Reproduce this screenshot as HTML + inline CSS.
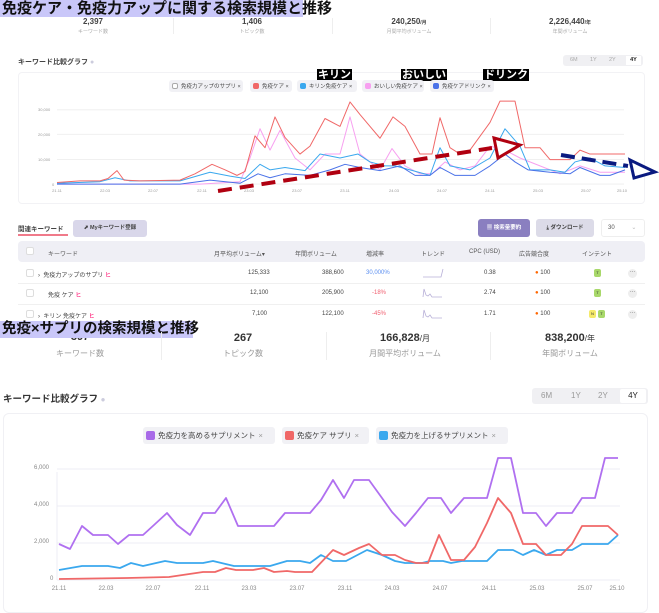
<!DOCTYPE html>
<html><head><meta charset="utf-8"><style>
*{margin:0;padding:0;box-sizing:border-box}
body{width:659px;height:600px;overflow:hidden;background:#fff;position:relative;font-family:"Liberation Sans","Noto Sans CJK JP",sans-serif;color:#333}
.a{position:absolute;white-space:nowrap}
.c{transform:translateX(-50%);text-align:center}
.ttl{background:#c9c7f9;color:#111;font-weight:bold}
.n1{font-size:8px;font-weight:bold;color:#444}
.l1{font-size:5px;color:#aaa}
.div{position:absolute;width:1px;background:#eee}
.chip{position:absolute;background:#f1f1f5;border-radius:3px;font-size:5.5px;color:#444;display:flex;align-items:center;padding-left:3px}
.cb{display:inline-block;border-radius:2px;margin-right:3px}
.blk{position:absolute;background:#000;color:#fff;font-weight:bold;font-size:11px;line-height:12px;padding:0 1px}
.th{font-size:6px;color:#555}
.td{font-size:6px;color:#444}
</style></head><body>
<!-- TOP -->
<div class="a ttl" style="left:0;top:0;width:303px;height:17px;font-size:15px;line-height:17px;padding-left:2px">免疫ケア・免疫力アップに関する検索規模と推移</div>
<div class="a c n1" style="left:93px;top:17px">2,397</div><div class="a c l1" style="left:93px;top:28px">キーワード数</div>
<div class="a c n1" style="left:252px;top:17px">1,406</div><div class="a c l1" style="left:252px;top:28px">トピック数</div>
<div class="a c n1" style="left:409px;top:17px">240,250<span style="font-size:5px">/月</span></div><div class="a c l1" style="left:409px;top:28px">月間平均ボリューム</div>
<div class="a c n1" style="left:570px;top:17px">2,226,440<span style="font-size:5px">/年</span></div><div class="a c l1" style="left:570px;top:28px">年間ボリューム</div>
<div class="div" style="left:173px;top:18px;height:16px"></div><div class="div" style="left:332px;top:18px;height:16px"></div><div class="div" style="left:490px;top:18px;height:16px"></div>
<div class="a" style="left:18px;top:57px;font-size:7px;font-weight:bold;color:#444">キーワード比較グラフ <span style="color:#ccd">●</span></div>
<div class="a" style="left:563px;top:55px;width:80px;height:11px;background:#f0f0f3;border-radius:3px;font-size:5.5px;color:#aaa"><span class="a" style="left:7px;top:2px">6M</span><span class="a" style="left:27px;top:2px">1Y</span><span class="a" style="left:46px;top:2px">2Y</span><span class="a" style="left:63px;top:1px;width:15px;height:9px;background:#fff;color:#222;text-align:center;padding-top:1px;font-weight:bold">4Y</span></div>
<div class="a" style="left:18px;top:72px;width:627px;height:132px;border:1px solid #f2f2f5;border-radius:4px"></div>
<div class="blk" style="left:317px;top:69px">キリン</div>
<div class="blk" style="left:401px;top:69px">おいしい</div>
<div class="blk" style="left:483px;top:69px">ドリンク</div>
<div class="chip" style="left:169px;top:80px;width:74px;height:12px"><span class="cb" style="width:6px;height:6px;border:1px solid #aaa;background:#fff"></span>免疫力アップのサプリ ×</div>
<div class="chip" style="left:250px;top:80px;width:42px;height:12px"><span class="cb" style="width:6px;height:6px;background:#f06868"></span>免疫ケア ×</div>
<div class="chip" style="left:297px;top:80px;width:60px;height:12px"><span class="cb" style="width:6px;height:6px;background:#3aa8ee"></span>キリン免疫ケア ×</div>
<div class="chip" style="left:362px;top:80px;width:62px;height:12px"><span class="cb" style="width:6px;height:6px;background:#f7a0f0"></span>おいしい免疫ケア ×</div>
<div class="chip" style="left:430px;top:80px;width:64px;height:12px"><span class="cb" style="width:6px;height:6px;background:#4a72e8"></span>免疫ケアドリンク ×</div>
<div class="a" style="left:38px;top:107px;font-size:4px;color:#999">30,000</div>
<div class="a" style="left:38px;top:132px;font-size:4px;color:#999">20,000</div>
<div class="a" style="left:38px;top:157px;font-size:4px;color:#999">10,000</div>
<div class="a" style="left:52px;top:182px;font-size:4px;color:#999">0</div>
<div style="position:absolute;left:0;top:188px;width:659px;font-size:4px;color:#999">
<span class="a c" style="left:57px">21.11</span><span class="a c" style="left:105px">22.03</span><span class="a c" style="left:153px">22.07</span><span class="a c" style="left:202px">22.11</span><span class="a c" style="left:249px">23.03</span><span class="a c" style="left:297px">23.07</span><span class="a c" style="left:345px">23.11</span><span class="a c" style="left:394px">24.03</span><span class="a c" style="left:442px">24.07</span><span class="a c" style="left:490px">24.11</span><span class="a c" style="left:538px">25.03</span><span class="a c" style="left:586px">25.07</span><span class="a c" style="left:622px">25.10</span></div>
<svg class="a" style="left:0;top:0" width="659" height="200">
<g transform="scale(1,0.79)" fill="none" stroke-width="1" stroke-linejoin="round">
<g stroke="#eee" vector-effect="non-scaling-stroke"><line x1="57" y1="139" x2="624" y2="139"/><line x1="57" y1="170" x2="624" y2="170"/><line x1="57" y1="202" x2="624" y2="202"/><line x1="57" y1="233" x2="624" y2="233"/></g>
<polyline vector-effect="non-scaling-stroke" stroke="#f7a0f0" points="57,233 200,233 240,230 250,200 260,163 270,190 280,165 295,200 310,215 325,195 340,195 350,148 360,195 380,215 392,188 405,210 420,220 432,220 445,205 460,215 475,210 490,185 505,190 520,200 540,210 560,220 580,210 600,218 625,218"/>
<polyline vector-effect="non-scaling-stroke" stroke="#3aa8ee" points="57,232 100,230 115,225 130,229 180,229 210,218 230,223 245,226 260,208 270,215 285,212 305,216 320,195 340,200 358,195 370,205 385,210 395,210 410,215 430,222 440,187 450,210 470,215 490,200 505,163 520,185 530,215 550,215 565,218 575,205 590,200 605,210 625,212"/>
<polyline vector-effect="non-scaling-stroke" stroke="#4a72e8" points="57,233 180,233 210,228 240,232 258,220 270,225 285,220 310,222 330,215 345,208 360,212 380,216 400,210 415,222 430,222 440,212 455,222 475,222 490,210 505,195 515,205 528,215 550,218 570,220 580,212 600,222 610,222 625,215"/>
<polyline vector-effect="non-scaling-stroke" stroke="#f06868" points="57,231 80,229 100,229 108,226 117,216 124,228 140,229 180,228 195,220 212,208 225,215 237,222 245,217 255,172 265,187 275,148 285,174 300,195 310,185 325,150 340,160 350,129 360,145 380,175 393,148 405,160 420,195 432,195 440,149 450,187 460,195 470,190 490,155 500,128 515,128 525,187 540,187 550,202 570,202 580,190 590,195 600,195 625,195"/>
</g>
<line x1="218" y1="191" x2="492" y2="148" stroke="#b00010" stroke-width="4" stroke-dasharray="14,8"/>
<polygon points="494,138 520,145 498,158" fill="#fff" stroke="#b00010" stroke-width="3"/>
<line x1="561" y1="155" x2="628" y2="166" stroke="#0a1a80" stroke-width="4" stroke-dasharray="14,7"/>
<polygon points="630,160 655,172 634,178" fill="#fff" stroke="#0a1a80" stroke-width="3"/>
</svg>
<!-- MIDDLE -->
<div class="a" style="left:18px;top:223px;font-size:6.5px;font-weight:bold;color:#444">関連キーワード</div>
<div class="a" style="left:18px;top:234px;width:50px;height:1.5px;background:#f07a8a"></div>
<div class="a" style="left:73px;top:220px;width:74px;height:17px;background:#d9d7ea;border-radius:3px;font-size:5.5px;line-height:17px;text-align:center;color:#444;font-weight:bold">⬈ Myキーワード登録</div>
<div class="a" style="left:478px;top:219px;width:52px;height:18px;background:#8a7fc0;border-radius:3px;font-size:5.5px;line-height:18px;text-align:center;color:#fff;font-weight:bold">▦ 検索量要約</div>
<div class="a" style="left:536px;top:219px;width:58px;height:18px;background:#dcdbe8;border-radius:3px;font-size:5.5px;line-height:18px;text-align:center;color:#444;font-weight:bold">⤓ ダウンロード</div>
<div class="a" style="left:601px;top:219px;width:44px;height:18px;border:1px solid #eee;border-radius:3px;font-size:6px;line-height:16px;padding-left:6px;color:#555">30 <span style="color:#bbb;margin-left:15px">⌄</span></div>
<div class="a" style="left:18px;top:241px;width:627px;height:21px;background:#efeff5;border-radius:4px"></div>
<div class="a" style="left:26px;top:247px;width:8px;height:8px;border:1px solid #ddd;border-radius:2px;background:#fff"></div>
<div class="a th" style="left:48px;top:249px">キーワード</div>
<div class="a th" style="left:214px;top:249px">月平均ボリューム▾</div>
<div class="a th" style="left:295px;top:249px">年間ボリューム</div>
<div class="a th" style="left:366px;top:249px">増減率</div>
<div class="a th" style="left:421px;top:249px">トレンド</div>
<div class="a th" style="left:469px;top:249px">CPC (USD)</div>
<div class="a th" style="left:519px;top:249px">広告競合度</div>
<div class="a th" style="left:582px;top:249px">インテント</div>
<div class="a" style="left:18px;top:283px;width:627px;height:1px;background:#f0f0f0"></div>
<div class="a" style="left:18px;top:304px;width:627px;height:1px;background:#f0f0f0"></div>
<!-- rows -->
<div class="a" style="left:26px;top:269px;width:8px;height:8px;border:1px solid #ddd;border-radius:2px"></div>
<div class="a td" style="left:38px;top:270px">›&nbsp;&nbsp;免疫力アップのサプリ <span style="color:#f06">ヒ</span></div>
<div class="a td" style="left:248px;top:270px">125,333</div><div class="a td" style="left:322px;top:270px">388,600</div>
<div class="a td" style="left:366px;top:270px;color:#5a8ef0">30,000%</div>
<div class="a td" style="left:484px;top:270px">0.38</div><div class="a td" style="left:535px;top:270px"><span style="color:#f60">●</span> 100</div>
<div class="a" style="left:594px;top:269px;width:7px;height:8px;background:#a8d86a;border-radius:2px;font-size:4px;text-align:center;line-height:8px">T</div>
<div class="a" style="left:628px;top:269px;width:9px;height:9px;background:#eee;border-radius:50%;font-size:5px;text-align:center;line-height:7px">···</div>
<svg class="a" style="left:422px;top:267px" width="22" height="12"><polyline points="1,10 19,10 21,2" fill="none" stroke="#b8b0d8" stroke-width="0.8"/></svg>

<div class="a" style="left:26px;top:289px;width:8px;height:8px;border:1px solid #ddd;border-radius:2px"></div>
<div class="a td" style="left:48px;top:290px">免疫 ケア <span style="color:#f06">ヒ</span></div>
<div class="a td" style="left:250px;top:290px">12,100</div><div class="a td" style="left:322px;top:290px">205,900</div>
<div class="a td" style="left:372px;top:290px;color:#f06070">-18%</div>
<div class="a td" style="left:484px;top:290px">2.74</div><div class="a td" style="left:535px;top:290px"><span style="color:#f60">●</span> 100</div>
<div class="a" style="left:594px;top:289px;width:7px;height:8px;background:#a8d86a;border-radius:2px;font-size:4px;text-align:center;line-height:8px">T</div>
<div class="a" style="left:628px;top:289px;width:9px;height:9px;background:#eee;border-radius:50%;font-size:5px;text-align:center;line-height:7px">···</div>
<svg class="a" style="left:422px;top:287px" width="22" height="12"><polyline points="1,10 2,2 4,8 6,9 8,7 10,10 20,10" fill="none" stroke="#b8b0d8" stroke-width="0.8"/></svg>

<div class="a" style="left:26px;top:310px;width:8px;height:8px;border:1px solid #ddd;border-radius:2px"></div>
<div class="a td" style="left:38px;top:311px">›&nbsp;&nbsp;キリン 免疫ケア <span style="color:#f06">ヒ</span></div>
<div class="a td" style="left:252px;top:311px">7,100</div><div class="a td" style="left:322px;top:311px">122,100</div>
<div class="a td" style="left:372px;top:311px;color:#f06070">-45%</div>
<div class="a td" style="left:484px;top:311px">1.71</div><div class="a td" style="left:535px;top:311px"><span style="color:#f60">●</span> 100</div>
<div class="a" style="left:589px;top:310px;width:7px;height:8px;background:#f5ea6a;border-radius:2px;font-size:4px;text-align:center;line-height:8px">N</div>
<div class="a" style="left:598px;top:310px;width:7px;height:8px;background:#a8d86a;border-radius:2px;font-size:4px;text-align:center;line-height:8px">T</div>
<div class="a" style="left:628px;top:310px;width:9px;height:9px;background:#eee;border-radius:50%;font-size:5px;text-align:center;line-height:7px">···</div>
<svg class="a" style="left:422px;top:308px" width="22" height="12"><polyline points="1,10 2,2 4,8 6,9 8,7 10,10 20,10" fill="none" stroke="#b8b0d8" stroke-width="0.8"/></svg>

<!-- BOTTOM -->
<div class="a c" style="left:80px;top:331px;font-size:11px;font-weight:bold;color:#333">397</div>
<div class="a ttl" style="left:0;top:321px;width:193px;height:17px;font-size:14.5px;line-height:17px;padding-left:2px">免疫×サプリの検索規模と推移</div>
<div class="a c" style="left:80px;top:348px;font-size:8px;color:#999">キーワード数</div>
<div class="a c" style="left:243px;top:332px;font-size:11px;font-weight:bold;color:#333">267</div><div class="a c" style="left:243px;top:348px;font-size:8px;color:#999">トピック数</div>
<div class="a c" style="left:405px;top:332px;font-size:11px;font-weight:bold;color:#333">166,828<span style="font-size:8px;font-weight:normal">/月</span></div><div class="a c" style="left:405px;top:348px;font-size:8px;color:#999">月間平均ボリューム</div>
<div class="a c" style="left:570px;top:332px;font-size:11px;font-weight:bold;color:#333">838,200<span style="font-size:8px;font-weight:normal">/年</span></div><div class="a c" style="left:570px;top:348px;font-size:8px;color:#999">年間ボリューム</div>
<div class="div" style="left:161px;top:332px;height:28px"></div><div class="div" style="left:326px;top:332px;height:28px"></div><div class="div" style="left:490px;top:332px;height:28px"></div>
<div class="a" style="left:3px;top:391px;font-size:9.5px;font-weight:bold;color:#333">キーワード比較グラフ <span style="color:#ccd;font-size:8px">●</span></div>
<div class="a" style="left:532px;top:388px;width:116px;height:16px;background:#f0f0f3;border-radius:3px;font-size:8px;color:#999"><span class="a" style="left:9px;top:3px">6M</span><span class="a" style="left:39px;top:3px">1Y</span><span class="a" style="left:66px;top:3px">2Y</span><span class="a" style="left:88px;top:1px;width:26px;height:14px;background:#fff;color:#222;text-align:center;line-height:14px;border-radius:2px">4Y</span></div>
<div class="a" style="left:3px;top:413px;width:645px;height:200px;border:1px solid #f0f0f4;border-radius:6px"></div>
<div class="chip" style="left:143px;top:427px;width:132px;height:17px;font-size:7.5px;padding-left:3px"><span class="cb" style="width:9px;height:9px;background:#a86ae8"></span>免疫力を高めるサプリメント <span style="color:#999;margin-left:3px">×</span></div>
<div class="chip" style="left:282px;top:427px;width:87px;height:17px;font-size:7.5px;padding-left:3px"><span class="cb" style="width:9px;height:9px;background:#f06868"></span>免疫ケア サプリ <span style="color:#999;margin-left:3px">×</span></div>
<div class="chip" style="left:376px;top:427px;width:132px;height:17px;font-size:7.5px;padding-left:3px"><span class="cb" style="width:9px;height:9px;background:#3aa8ee"></span>免疫力を上げるサプリメント <span style="color:#999;margin-left:3px">×</span></div>
<div class="a" style="left:34px;top:465px;font-size:6px;color:#888">6,000</div>
<div class="a" style="left:34px;top:502px;font-size:6px;color:#888">4,000</div>
<div class="a" style="left:34px;top:539px;font-size:6px;color:#888">2,000</div>
<div class="a" style="left:50px;top:576px;font-size:6px;color:#888">0</div>
<div style="position:absolute;left:0;top:586px;width:659px;font-size:6px;color:#888">
<span class="a c" style="left:59px">21.11</span><span class="a c" style="left:106px">22.03</span><span class="a c" style="left:153px">22.07</span><span class="a c" style="left:202px">22.11</span><span class="a c" style="left:249px">23.03</span><span class="a c" style="left:297px">23.07</span><span class="a c" style="left:345px">23.11</span><span class="a c" style="left:392px">24.03</span><span class="a c" style="left:440px">24.07</span><span class="a c" style="left:489px">24.11</span><span class="a c" style="left:537px">25.03</span><span class="a c" style="left:585px">25.07</span><span class="a c" style="left:617px">25.10</span></div>
<svg class="a" style="left:0;top:440px" width="659" height="160">
<g transform="translate(0,-440)" fill="none" stroke-linejoin="round">
<g stroke="#ececf4" stroke-width="1"><line x1="57" y1="469" x2="620" y2="469"/><line x1="57" y1="506" x2="620" y2="506"/><line x1="57" y1="543" x2="620" y2="543"/><line x1="57" y1="580" x2="620" y2="580"/><line x1="57" y1="472" x2="57" y2="580"/></g>
<polyline stroke="#3aa8ee" stroke-width="1.8" points="59,570 82,566 108,566 120,568 131,563 143,566 165,561 177,563 203,563 213,561 234,566 270,566 287,561 300,561 310,563 321,555 333,561 346,561 367,550 382,555 395,561 405,563 422,563 430,561 443,561 451,563 462,561 487,561 498,550 513,550 523,555 534,550 546,555 557,550 572,550 582,544 608,544 618,535"/>
<polyline stroke="#f06868" stroke-width="1.8" points="59,579 127,578 169,577 203,572 215,572 226,568 236,570 253,570 264,568 274,572 287,571 295,572 312,572 333,550 344,555 359,548 369,544 382,555 395,555 405,560 416,563 428,563 439,535 451,560 464,560 475,547 487,523 498,498 511,513 523,544 536,544 546,555 561,555 572,544 582,526 608,526 618,535"/>
<polyline stroke="#b070f0" stroke-width="1.8" points="59,544 70,549 82,526 93,535 108,535 118,544 129,535 143,535 154,525 167,513 177,525 190,535 203,513 215,513 226,498 238,526 274,526 285,513 310,513 321,500 333,480 344,498 354,480 369,480 382,498 392,512 405,526 416,513 428,498 441,498 451,513 464,498 487,498 498,458 511,458 523,513 536,513 546,526 557,513 572,513 582,498 595,498 605,458 618,458"/>
</g></svg>
</body></html>
